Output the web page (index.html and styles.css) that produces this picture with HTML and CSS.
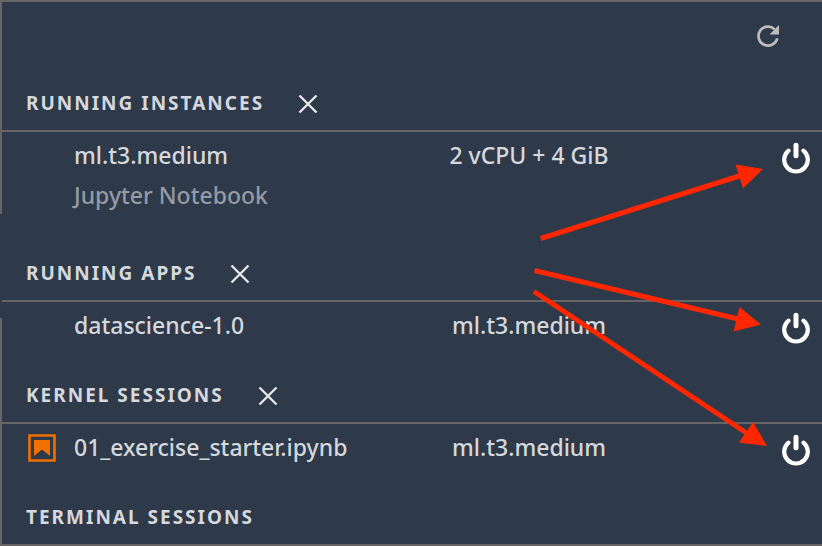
FILE: index.html
```html
<!DOCTYPE html>
<html lang="en">
<head>
<meta charset="utf-8">
<title>Running terminals and kernels</title>
<link rel="stylesheet" href="styles.css">
</head>
<body>
<svg class="sprite" aria-hidden="true">
  <symbol id="close" viewBox="0 0 20 20"><path d="M1.500 1.500l17 17M18.500 1.500l-17 17" fill="none" stroke="currentColor" stroke-width="2.400"/></symbol>
  <symbol id="power" viewBox="0 0 28 32"><path d="M6.500 8.600A11.800 11.800 0 1 0 21.500 8.600" fill="none" stroke="currentColor" stroke-width="4.200" stroke-linecap="round"/><path d="M14 3.200v10.600" fill="none" stroke="currentColor" stroke-width="5" stroke-linecap="round"/></symbol>
</svg>
<main class="panel">
  <div class="toolbar">
    <button class="icon-button" type="button" aria-label="Refresh">
      <svg class="refresh" viewBox="0 0 22 22"><path d="M20.300 13.200A9.500 9.500 0 1 1 17.600 4.200" fill="none" stroke="currentColor" stroke-width="2.700"/><path d="M22 0v9.500h-9.500z" fill="currentColor"/></svg>
    </button>
  </div>

  <section class="group">
    <header class="group-header">
      <h2>RUNNING INSTANCES</h2>
      <button class="icon-button" type="button" aria-label="Shut down all instances"><svg class="close"><use href="#close"/></svg></button>
    </header>
    <ul class="rows">
      <li class="row">
        <span class="name">ml.t3.medium</span>
        <span class="detail">2 vCPU + 4 GiB</span>
        <button class="icon-button shutdown" type="button" aria-label="Shut down ml.t3.medium"><svg class="power"><use href="#power"/></svg></button>
        <span class="name note">Jupyter Notebook</span>
      </li>
    </ul>
  </section>

  <section class="group apps">
    <header class="group-header">
      <h2>RUNNING APPS</h2>
      <button class="icon-button" type="button" aria-label="Shut down all apps"><svg class="close"><use href="#close"/></svg></button>
    </header>
    <ul class="rows">
      <li class="row">
        <span class="name">datascience-1.0</span>
        <span class="detail">ml.t3.medium</span>
        <button class="icon-button shutdown" type="button" aria-label="Shut down datascience-1.0"><svg class="power"><use href="#power"/></svg></button>
      </li>
    </ul>
  </section>

  <section class="group">
    <header class="group-header">
      <h2>KERNEL SESSIONS</h2>
      <button class="icon-button" type="button" aria-label="Shut down all kernels"><svg class="close"><use href="#close"/></svg></button>
    </header>
    <ul class="rows">
      <li class="row">
        <svg class="notebook" viewBox="0 0 28 28" aria-hidden="true"><path d="M1.500 1.500h25v25h-25z" fill="none" stroke="currentColor" stroke-width="2.600"/><path d="M6 6h16v16l-8-6.500-8 6.500z" fill="currentColor"/></svg>
        <span class="name">01_exercise_starter.ipynb</span>
        <span class="detail">ml.t3.medium</span>
        <button class="icon-button shutdown" type="button" aria-label="Shut down 01_exercise_starter.ipynb"><svg class="power"><use href="#power"/></svg></button>
      </li>
    </ul>
  </section>

  <section class="group">
    <header class="group-header last">
      <h2>TERMINAL SESSIONS</h2>
    </header>
  </section>

  <svg class="arrows" viewBox="0 0 822 546" preserveAspectRatio="xMaxYMin meet" aria-hidden="true">
    <g stroke="#ff2600" stroke-width="5"><path d="M540.700 238.500L741 175.500"/><path d="M534.500 270.500L738 319"/><path d="M534 291.500L748 434"/></g>
    <g fill="#ff2600"><path d="M763 169L735.500 164.500L743 188.500z"/><path d="M761 324.500L739.500 307L733.500 331.500z"/><path d="M767 446L753 422L739 442.500z"/></g>
  </svg>
</main>
</body>
</html>
```

FILE: styles.css
```css
* {
  box-sizing: border-box;
}

body {
  margin: 0;
  background: #2e3949;
  color: #d5d8dd;
  font: 500 23px/40px "Noto Sans", "Open Sans", sans-serif;
}

.sprite {
  position: absolute;
  width: 0;
  height: 0;
}

.panel {
  position: relative;
  min-height: 100vh;
  border: 2px solid #666464;
  border-right: 0;
}

.toolbar {
  display: flex;
  justify-content: flex-end;
  align-items: center;
  height: 74px;
  padding: 0 43px 6px 24px;
}

.icon-button {
  display: flex;
  padding: 0;
  border: 0;
  background: none;
  color: #e6e6e6;
  cursor: pointer;
}

.refresh {
  width: 22px;
  height: 22px;
  color: #bdbdbd;
}

.close {
  width: 20px;
  height: 20px;
}

.power {
  width: 28px;
  height: 32px;
  color: #fff;
}

.group {
  position: relative;
}

.group-header {
  display: flex;
  align-items: center;
  gap: 34px;
  height: 56px;
  padding-left: 24px;
  border-bottom: 2px solid #666464;
}

.group-header .icon-button {
  padding-top: 2px;
}

.group-header.last {
  height: 54px;
  border-bottom: 0;
}

h2 {
  margin: 0;
  font-size: 19px;
  font-weight: 700;
  line-height: 28px;
  letter-spacing: 2px;
}

.rows {
  margin: 0 0 18px;
  padding: 0;
  list-style: none;
}

.row {
  display: grid;
  grid-template-columns: 48px 354fr 202fr 180fr;
  align-items: center;
  padding: 3px 12px 5px 24px;
}

.name {
  grid-column: 2;
  white-space: nowrap;
}

.note {
  margin-bottom: 8px;
  color: #949ba5;
}

.detail {
  text-align: center;
  white-space: nowrap;
}

.shutdown {
  justify-self: end;
  padding-top: 5px;
}

.notebook {
  width: 28px;
  height: 30px;
  margin-left: 2px;
  padding-top: 2px;
  color: #f07000;
}

/* The left edge is open beside the apps header */
.apps::before {
  content: "";
  position: absolute;
  top: -32px;
  left: -2px;
  width: 2px;
  height: 104px;
  background: #2e3949;
}

.arrows {
  position: absolute;
  top: -2px;
  right: 0;
  width: 822px;
  height: 546px;
  pointer-events: none;
}
```
